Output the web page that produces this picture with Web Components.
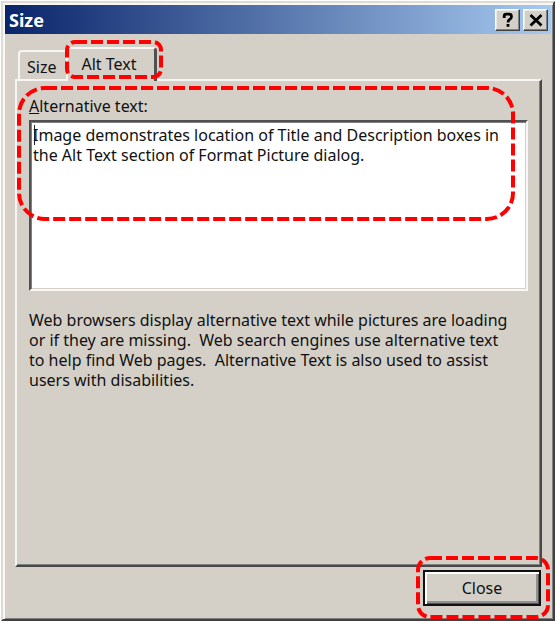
<!DOCTYPE html>
<html lang="en">
<head>
<meta charset="utf-8">
<title>Size</title>
<style>
html, body { margin: 0; }
body {
  box-sizing: border-box; min-height: 100vh; padding: 1px 1px 2px;
  display: flex; background: #fff; color: #111;
  font: 16px/20px "Noto Sans", sans-serif;
}
</style>
</head>
<body>
<size-dialog></size-dialog>

<template id="size-dialog">
  <style>
    :host {
      flex: 1; min-width: 0; box-sizing: border-box; display: flex; flex-direction: column;
      background: #d4d0c8; border: 2px solid; border-color: #dedbd4 #404040 #404040 #dedbd4;
      box-shadow: inset 2px 2px #f8f7f5, inset -1px -1px #808080; padding: 2px;
    }
    main { flex: 1; display: flex; flex-direction: column; padding: 13px 9px 0 10px; }
    footer { display: flex; justify-content: flex-end; padding: 3px 10px 11px 0; }
    p { margin: 0; padding: 19px 12px 0 0; white-space: pre-wrap; }
    .alt { --inset: -7px -6px 0 -1px; --radius: 8px; }
    .text { --inset: -10px 13px 70px -12px; --radius: 26px; }
    .close { --inset: -14px -9px -13px -7px; --radius: 12px; }
  </style>
  <title-bar>Size</title-bar>
  <main>
    <tab-strip>
      <tab-button>Size</tab-button>
      <callout-ring class="alt"><tab-button selected>Alt Text</tab-button></callout-ring>
    </tab-strip>
    <tab-panel>
      <callout-ring class="text"><text-area-field value="Image demonstrates location of Title and Description boxes in the Alt Text section of Format Picture dialog."></text-area-field></callout-ring>
      <p>Web browsers display alternative text while pictures are loading or if they are missing.  Web search engines use alternative text to help find Web pages.  Alternative Text is also used to assist users with disabilities.</p>
    </tab-panel>
  </main>
  <footer><callout-ring class="close"><push-button>Close</push-button></callout-ring></footer>
</template>

<template id="title-bar">
  <style>
    :host {
      display: flex; align-items: center; gap: 3px; height: 29px; padding: 0 3px 0 4px;
      background: linear-gradient(90deg, #0a246a, #a6caf0); color: #fff;
    }
    h1 { flex: 1; margin: 0; font: 700 18px/24px "Noto Sans", sans-serif; }
    button {
      width: 25px; height: 22px; padding: 0; display: grid; place-items: center;
      background: #d4d0c8; border: 1px solid; border-color: #fff #404040 #404040 #fff; border-radius: 0;
      box-shadow: inset -1px -1px #808080, inset 1px 1px #eceae5;
    }
    svg { display: block; }
  </style>
  <h1><slot></slot></h1>
  <button type="button" aria-label="Help"><svg width="12" height="16" viewBox="0 0 12 16" fill="none" stroke="#000" stroke-width="2.8"><path d="M2.200 6V4.200Q2.200 2.200 4.200 2.200H7Q9.400 2.200 9.400 4.200V5Q9.400 6.500 7.500 7.500Q6 8.400 6 10.500"/><path d="M6 12V14.800"/></svg></button>
  <button type="button" aria-label="Close window"><svg width="14" height="14" viewBox="0 0 14 14" fill="none" stroke="#000" stroke-width="2.800"><path d="M1.500 2L12.500 12.500M12.500 2L1.500 12.500"/></svg></button>
</template>

<template id="tab-strip">
  <style>:host { display: flex; align-items: flex-end; padding-left: 3px; }</style>
  <slot></slot>
</template>

<template id="tab-button">
  <style>
    :host { display: block; }
    button {
      display: block; height: 29px; padding: 2px 10px 0 7px; font: inherit; color: inherit;
      background: #d4d0c8; border: solid #f6f5f2; border-width: 2px 0 0 2px; border-radius: 4px 0 0 0;
    }
    :host([selected]) button {
      height: 34px; margin-bottom: -2px; padding: 0 18px 2px 13px;
      border-right: 3px solid #505050; border-radius: 4px 4px 0 0;
    }
  </style>
  <button type="button" role="tab"><slot></slot></button>
</template>

<template id="tab-panel">
  <style>
    :host {
      display: block; flex: 1; padding: 15px 12px 12px;
      border: 2px solid; border-color: #f6f5f2 #484848 #484848 #f6f5f2;
      box-shadow: inset -1px -1px #808080;
    }
  </style>
  <slot></slot>
</template>

<template id="text-area-field">
  <style>
    :host { display: block; }
    label { display: block; padding-bottom: 4px; }
    .box { position: relative; }
    textarea {
      display: block; box-sizing: border-box; width: 100%; height: 171px; margin: 0; padding: 3px 2px;
      resize: none; overflow: hidden; outline: 0; font: inherit; color: inherit; background: #fff;
      border: 2px solid; border-color: #505050 #f8f7f5 #f8f7f5 #505050; border-radius: 0;
      box-shadow: inset 1px 1px #808080, inset -1px -1px #d4d0c8;
    }
    .caret { position: absolute; left: 5px; top: 5px; width: 1px; height: 20px; background: #222; }
  </style>
  <label for="alt"><u>A</u>lternative text:</label>
  <div class="box"><textarea id="alt" spellcheck="false"></textarea><span class="caret"></span></div>
</template>

<template id="push-button">
  <style>
    :host { display: block; }
    button {
      display: block; width: 118px; height: 36px; padding: 0; font: inherit; color: inherit;
      background: #d4d0c8; border: 2px solid #111; border-radius: 0;
      box-shadow: inset 2px 2px #fff, inset -1px -1px #505050, inset -3px -3px #909090;
    }
  </style>
  <button type="button"><slot></slot></button>
</template>

<template id="callout-ring">
  <style>
    :host { display: block; position: relative; }
    .ring { position: absolute; inset: var(--inset); pointer-events: none; }
    svg { display: block; width: 100%; height: 100%; overflow: visible; }
    rect { x: 2px; y: 2px; width: calc(100% - 4px); height: calc(100% - 4px); rx: var(--radius); fill: none; stroke: #f00; stroke-width: 4px; stroke-dasharray: 12 4; }
  </style>
  <slot></slot>
  <div class="ring"><svg aria-hidden="true"><rect></rect></svg></div>
</template>

<script>
class TemplateElement extends HTMLElement {
  constructor() {
    super();
    const template = document.getElementById(this.localName);
    this.attachShadow({ mode: "open" }).append(template.content.cloneNode(true));
  }
}
class TitleBar extends TemplateElement {}
class TabStrip extends TemplateElement {
  connectedCallback() { this.setAttribute("role", "tablist"); }
}
class TabButton extends TemplateElement {
  connectedCallback() {
    this.shadowRoot.querySelector("button").setAttribute("aria-selected", String(this.hasAttribute("selected")));
  }
}
class TabPanel extends TemplateElement {
  connectedCallback() { this.setAttribute("role", "tabpanel"); }
}
class TextAreaField extends TemplateElement {
  connectedCallback() {
    this.shadowRoot.querySelector("textarea").value = this.getAttribute("value") || "";
  }
}
class PushButton extends TemplateElement {}
class CalloutRing extends TemplateElement {}
class SizeDialog extends TemplateElement {
  connectedCallback() { this.setAttribute("role", "dialog"); this.setAttribute("aria-label", "Size"); }
}
customElements.define("title-bar", TitleBar);
customElements.define("tab-strip", TabStrip);
customElements.define("tab-button", TabButton);
customElements.define("tab-panel", TabPanel);
customElements.define("text-area-field", TextAreaField);
customElements.define("push-button", PushButton);
customElements.define("callout-ring", CalloutRing);
customElements.define("size-dialog", SizeDialog);
</script>
</body>
</html>
